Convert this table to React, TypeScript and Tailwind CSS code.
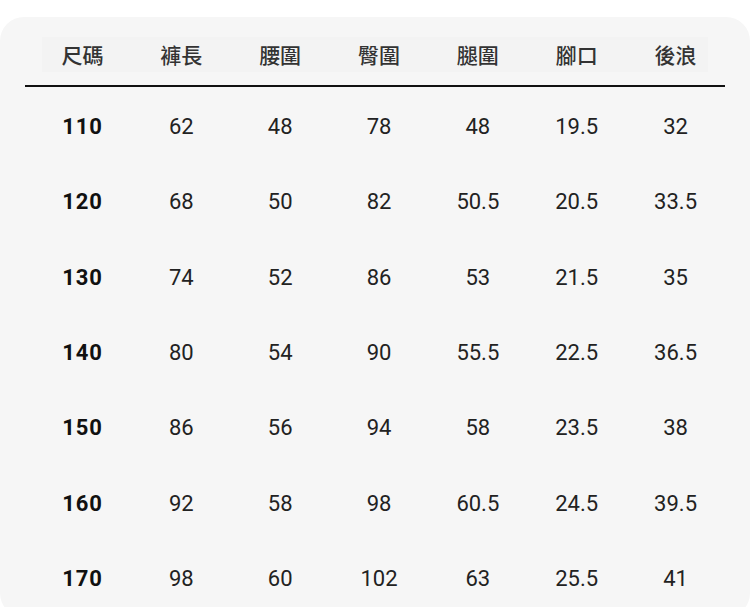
const headers = ['尺碼', '褲長', '腰圍', '臀圍', '腿圍', '腳口', '後浪']

const rows = [
  ['110', '62', '48', '78', '48', '19.5', '32'],
  ['120', '68', '50', '82', '50.5', '20.5', '33.5'],
  ['130', '74', '52', '86', '53', '21.5', '35'],
  ['140', '80', '54', '90', '55.5', '22.5', '36.5'],
  ['150', '86', '56', '94', '58', '23.5', '38'],
  ['160', '92', '58', '98', '60.5', '24.5', '39.5'],
  ['170', '98', '60', '102', '63', '25.5', '41'],
]

export default function App() {
  return (
    <div
      className="w-[750px] h-[607px] bg-white overflow-hidden pt-[17px]"
      style={{ fontFamily: '"Noto Sans CJK TC", "Noto Sans", sans-serif' }}
    >
      <div className="h-[600px] bg-[#f6f6f6] rounded-[24px] pt-[20px]">
        <div className="ml-[25px] w-[700px]">
          {/* header */}
          <div className="border-b-2 border-[#111] pb-[13px]">
            <div className="mx-[17px] bg-[#f3f3f3]">
              <div className="grid grid-cols-7 -ml-[9px] -mr-[17px] h-[35px] items-center">
                {headers.map((h) => (
                  <div
                    key={h}
                    className="text-center text-[21px] font-medium text-[#333] leading-none"
                  >
                    {h}
                  </div>
                ))}
              </div>
            </div>
          </div>

          {/* body */}
          <div className="pt-[2px] pl-[8px] font-['Roboto',sans-serif]">
            {rows.map((r) => (
              <div key={r[0]} className="grid grid-cols-7 h-[75.3px] items-center">
                {r.map((v, i) => (
                  <div
                    key={i}
                    className={
                      i === 0
                        ? 'text-center text-[22px] font-bold tracking-[0.8px] text-[#111]'
                        : 'text-center text-[22px] text-[#222]'
                    }
                  >
                    {v}
                  </div>
                ))}
              </div>
            ))}
          </div>
        </div>
      </div>
    </div>
  )
}
